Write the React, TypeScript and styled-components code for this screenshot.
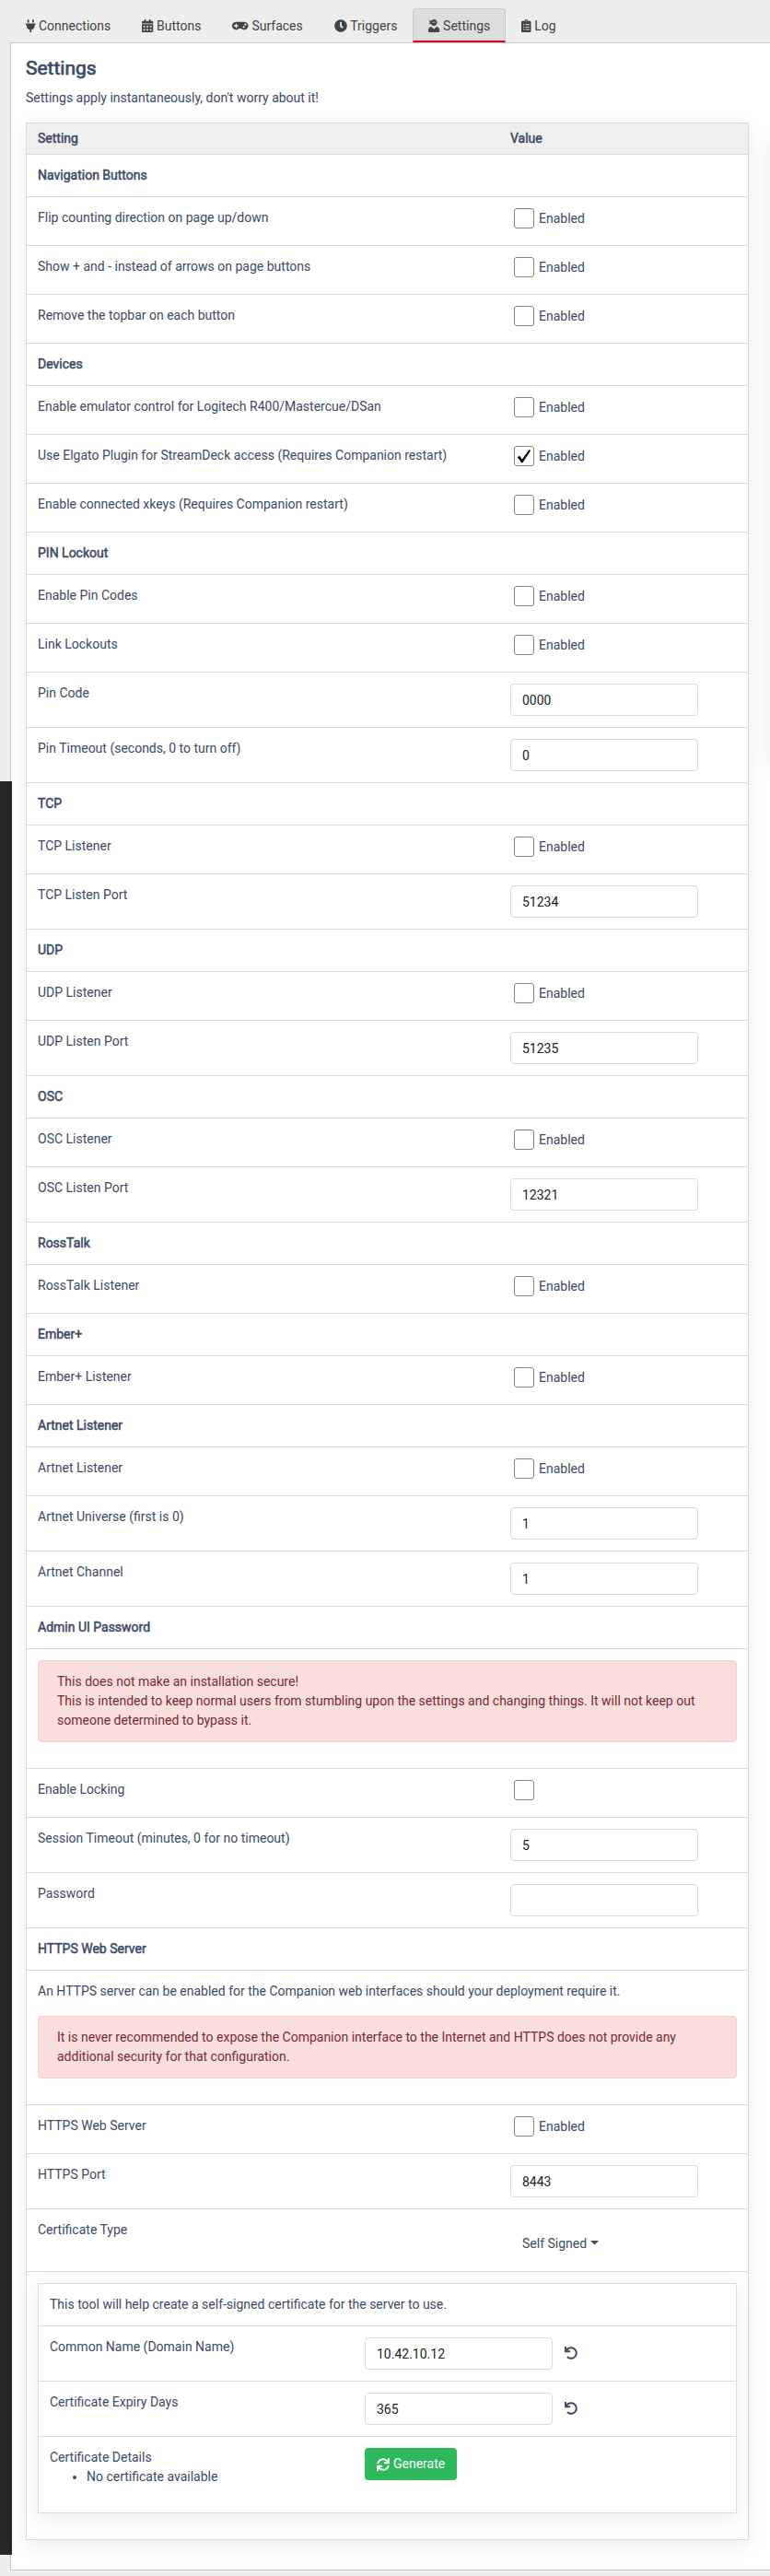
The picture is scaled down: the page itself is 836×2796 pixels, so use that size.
import React from 'react';
import styled, { createGlobalStyle } from 'styled-components';
import { FaPlug, FaCalendarAlt, FaGamepad, FaClock, FaUserNinja, FaClipboardList, FaUndo, FaSync } from 'react-icons/fa';

const GlobalStyle = createGlobalStyle`
  *, *::before, *::after { box-sizing: border-box; }
  body {
    margin: 0;
    background: #ededed;
    color: #3c4b64;
    font: 400 14px/1.5 Roboto, sans-serif;
    overflow: hidden;
  }
`;

const Page = styled.div`
  position: relative;
  height: 2796px;
  padding: 9px 0 0 11px;
  overflow: hidden;
`;

const SideStrip = styled.div`
  position: absolute;
  left: 0;
  top: 848px;
  width: 13px;
  height: 1925px;
  background: #262626;
`;

const NeighbourShadow = styled.div`
  position: absolute;
  left: 836px;
  top: 149px;
  width: 40px;
  height: 674px;
  box-shadow: 0 6px 20px rgba(0, 0, 0, 0.09);
`;

const Tabs = styled.nav`
  display: flex;
  height: 37px;
`;

const Tab = styled.a<{ $active?: boolean; $iconWidth: number }>`
  display: flex;
  align-items: flex-start;
  padding: 8px 16px 0;
  border: 1px solid ${p => (p.$active ? '#c4c9d0' : 'transparent')};
  border-bottom: ${p => (p.$active ? '2px solid #d50215' : '0')};
  border-radius: 4px 4px 0 0;
  background: ${p => (p.$active ? '#ddd' : 'transparent')};
  color: #444;
  white-space: pre;

  svg {
    flex: none;
    width: ${p => p.$iconWidth}px;
    height: 14px;
    margin: 3px 3.5px 0 0;
  }
`;

const Panel = styled.main`
  height: 2744px;
  padding: 15px 23px 0 16px;
  border: 1px solid #c4c9d0;
  border-right: 0;
  background: #fff;
`;

const Title = styled.h4`
  margin: 0 0 9px;
  font-size: 21px;
  line-height: 25px;
  font-weight: 400;
  -webkit-text-stroke: 0.7px currentColor;
`;

const Intro = styled.p`
  margin: 0 0 16px;
`;

const Table = styled.div`
  border: 1px solid #d8dbe0;
  box-shadow: 0 6px 20px rgba(0, 0, 0, 0.08);
`;

const Row = styled.div`
  display: flex;
  padding: 12px;

  & + & { border-top: 1px solid #d8dbe0; }
`;

const HeadRow = styled(Row)`
  padding: 6px 12px;
  background: #efefef;
`;

const Strong = styled.span`
  -webkit-text-stroke: 0.5px currentColor;
`;

const Label = styled.div<{ $width?: number }>`
  flex: 0 0 ${p => p.$width ?? 513}px;
`;

const Block = styled.div`
  flex: 1;
`;

const CheckLabel = styled.label`
  display: flex;
  height: 28px;
  padding: 0 0 0 4px;
  gap: 5px;
  line-height: 23px;
`;

const Box = styled.span`
  display: flex;
  width: 22px;
  height: 22px;
  border: 1px solid #858585;
  border-radius: 3px;
  background: #fff;
`;

const Input = styled.input`
  width: 204px;
  height: 35px;
  padding: 6px 12px;
  border: 1px solid #d8dbe0;
  border-radius: 4px;
  background: #fff;
  color: #222;
  font: inherit;
`;

const Alert = styled.div`
  margin-bottom: 16px;
  padding: 12px 20px;
  border: 1px solid #f8cfcf;
  border-radius: 4px;
  background: #fadddd;
  color: #772b35;
`;

const Paragraph = styled.p`
  margin: 0 0 16px;
`;

const Dropdown = styled.button`
  display: flex;
  align-items: center;
  height: 35px;
  margin-top: 8px;
  padding: 0 13px;
  border: 0;
  background: none;
  color: inherit;
  font: inherit;

  svg {
    margin: 0 0 2px 4px;
  }
`;

const NestedTable = styled(Table)`
  flex: 1;
  margin-bottom: 16px;
`;

const ResetButton = styled.button`
  display: flex;
  align-items: center;
  height: 35px;
  padding: 0 13px 1px;
  border: 0;
  background: none;
  color: inherit;
  font-size: 14px;
`;

const GenerateButton = styled.button`
  display: flex;
  align-items: center;
  gap: 4px;
  height: 35px;
  padding: 0 13px;
  border: 0;
  border-radius: 4px;
  background: #2eb85c;
  color: #fff;
  font: inherit;
`;

const DetailList = styled.ul`
  margin: 0 0 16px;
  padding-left: 40px;
`;

function Checkbox({ label = 'Enabled', checked = false }: { label?: string; checked?: boolean }) {
  return (
    <CheckLabel>
      <Box>
        {checked && (
          <svg width="20" height="20" viewBox="0 0 20 20">
            <path d="M2.7 11.2 5 9.7l2.9 3.7L15.6 3l1.5 1L8.5 17.3H7.3Z" fill="#000" />
          </svg>
        )}
      </Box>
      {label}
    </CheckLabel>
  );
}

const Section = ({ title }: { title: string }) => (
  <Row><Strong>{title}</Strong></Row>
);

const Check = ({ name, label, checked }: { name: string; label?: string; checked?: boolean }) => (
  <Row><Label>{name}</Label><Checkbox label={label} checked={checked} /></Row>
);

const Field = ({ name, value }: { name: string; value: string }) => (
  <Row><Label>{name}</Label><Input defaultValue={value} /></Row>
);

const TABS = [
  { name: 'Connections', Icon: FaPlug, iconWidth: 10.5 },
  { name: 'Buttons', Icon: FaCalendarAlt, iconWidth: 12.25 },
  { name: 'Surfaces', Icon: FaGamepad, iconWidth: 17.5 },
  { name: 'Triggers', Icon: FaClock, iconWidth: 14 },
  { name: 'Settings', Icon: FaUserNinja, iconWidth: 12.25 },
  { name: 'Log', Icon: FaClipboardList, iconWidth: 10.5 },
];

export default function App() {
  return (
    <Page>
      <GlobalStyle />
      <Tabs>
        {TABS.map(({ name, Icon, iconWidth }) => (
          <Tab key={name} $active={name === 'Settings'} $iconWidth={iconWidth}><Icon />{name}</Tab>
        ))}
      </Tabs>
      <Panel>
        <Title>Settings</Title>
        <Intro>Settings apply instantaneously, don't worry about it!</Intro>
        <Table>
          <HeadRow><Label><Strong>Setting</Strong></Label><Strong>Value</Strong></HeadRow>

          <Section title="Navigation Buttons" />
          <Check name="Flip counting direction on page up/down" />
          <Check name="Show + and - instead of arrows on page buttons" />
          <Check name="Remove the topbar on each button" />

          <Section title="Devices" />
          <Check name="Enable emulator control for Logitech R400/Mastercue/DSan" />
          <Check name="Use Elgato Plugin for StreamDeck access (Requires Companion restart)" checked />
          <Check name="Enable connected xkeys (Requires Companion restart)" />

          <Section title="PIN Lockout" />
          <Check name="Enable Pin Codes" />
          <Check name="Link Lockouts" />
          <Field name="Pin Code" value="0000" />
          <Field name="Pin Timeout (seconds, 0 to turn off)" value="0" />

          <Section title="TCP" />
          <Check name="TCP Listener" />
          <Field name="TCP Listen Port" value="51234" />

          <Section title="UDP" />
          <Check name="UDP Listener" />
          <Field name="UDP Listen Port" value="51235" />

          <Section title="OSC" />
          <Check name="OSC Listener" />
          <Field name="OSC Listen Port" value="12321" />

          <Section title="RossTalk" />
          <Check name="RossTalk Listener" />

          <Section title="Ember+" />
          <Check name="Ember+ Listener" />

          <Section title="Artnet Listener" />
          <Check name="Artnet Listener" />
          <Field name="Artnet Universe (first is 0)" value="1" />
          <Field name="Artnet Channel" value="1" />

          <Section title="Admin UI Password" />
          <Row>
            <Block>
              <Alert>
                This does not make an installation secure!<br />
                This is intended to keep normal users from stumbling upon the settings and changing things. It will not keep out someone determined to bypass it.
              </Alert>
            </Block>
          </Row>
          <Check name="Enable Locking" label="" />
          <Field name="Session Timeout (minutes, 0 for no timeout)" value="5" />
          <Field name="Password" value="" />

          <Section title="HTTPS Web Server" />
          <Row>
            <Block>
              <Paragraph>An HTTPS server can be enabled for the Companion web interfaces should your deployment require it.</Paragraph>
              <Alert>
                It is never recommended to expose the Companion interface to the Internet and HTTPS does not provide any additional security for that configuration.
              </Alert>
            </Block>
          </Row>
          <Check name="HTTPS Web Server" />
          <Field name="HTTPS Port" value="8443" />
          <Row>
            <Label>Certificate Type</Label>
            <Dropdown>
              Self Signed
              <svg width="9" height="5" viewBox="0 0 9 5"><path d="M0 0h9L4.5 4.5Z" fill="currentColor" /></svg>
            </Dropdown>
          </Row>
          <Row>
            <NestedTable>
              <Row>This tool will help create a self-signed certificate for the server to use.</Row>
              <Row>
                <Label $width={342}>Common Name (Domain Name)</Label>
                <Input defaultValue="10.42.10.12" />
                <ResetButton aria-label="Reset common name"><FaUndo /></ResetButton>
              </Row>
              <Row>
                <Label $width={342}>Certificate Expiry Days</Label>
                <Input defaultValue="365" />
                <ResetButton aria-label="Reset expiry days"><FaUndo /></ResetButton>
              </Row>
              <Row>
                <Label $width={342}>
                  Certificate Details
                  <DetailList><li>No certificate available</li></DetailList>
                </Label>
                <GenerateButton><FaSync />Generate</GenerateButton>
              </Row>
            </NestedTable>
          </Row>
        </Table>
      </Panel>
      <SideStrip />
      <NeighbourShadow />
    </Page>
  );
}
